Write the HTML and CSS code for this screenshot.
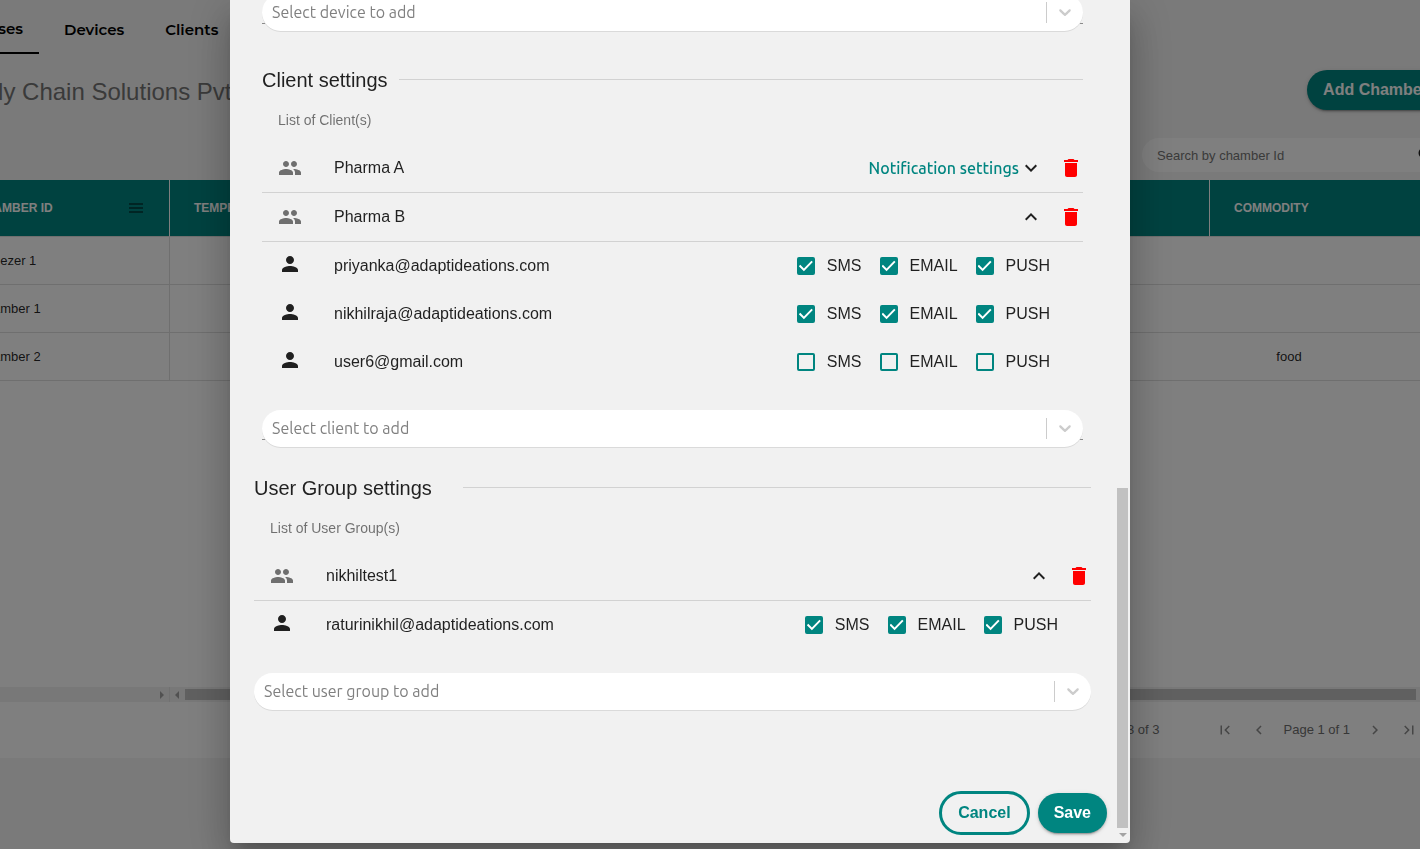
FILE: index.html
```html
<!DOCTYPE html>
<html lang="en">
<head>
<meta charset="utf-8">
<title>Chambers</title>
<link rel="stylesheet" href="styles.css">
</head>
<body>
<svg class="sprite" aria-hidden="true">
  <symbol id="people" viewBox="0 0 24 24"><path d="M16 11c1.66 0 2.99-1.34 2.99-3S17.66 5 16 5s-3 1.34-3 3 1.34 3 3 3zm-8 0c1.66 0 2.99-1.34 2.99-3S9.66 5 8 5 5 6.34 5 8s1.34 3 3 3zm0 2c-2.33 0-7 1.17-7 3.5V19h14v-2.500c0-2.330-4.670-3.500-7-3.500zm8 0c-.29 0-.62.02-.97.05 1.160.84 1.970 1.970 1.970 3.450V19h6v-2.500c0-2.330-4.670-3.500-7-3.500z"/></symbol>
  <symbol id="person" viewBox="0 0 24 24"><path d="M12 12c2.210 0 4-1.790 4-4s-1.790-4-4-4-4 1.790-4 4 1.790 4 4 4zm0 2c-2.670 0-8 1.340-8 4v2h16v-2c0-2.660-5.330-4-8-4z"/></symbol>
  <symbol id="trash" viewBox="0 0 24 24"><path d="M6 19c0 1.100.9 2 2 2h8c1.100 0 2-.9 2-2V7H6v12zM19 4h-3.500l-1-1h-5l-1 1H5v2h14V4z"/></symbol>
  <symbol id="down" viewBox="0 0 24 24"><path d="M7.410 8.590 12 13.170l4.590-4.580L18 10l-6 6-6-6z"/></symbol>
  <symbol id="up" viewBox="0 0 24 24"><path d="M7.410 15.410 12 10.830l4.590 4.580L18 14l-6-6-6 6z"/></symbol>
  <symbol id="left" viewBox="0 0 24 24"><path d="M15.410 7.410 14 6l-6 6 6 6 1.410-1.410L10.830 12z"/></symbol>
  <symbol id="right" viewBox="0 0 24 24"><path d="M10 6 8.590 7.410 13.170 12l-4.580 4.590L10 18l6-6z"/></symbol>
  <symbol id="first" viewBox="0 0 24 24"><path d="M18.410 16.590 13.820 12l4.590-4.590L17 6l-6 6 6 6zM6 6h2v12H6z"/></symbol>
  <symbol id="last" viewBox="0 0 24 24"><path d="M5.590 7.410 10.180 12l-4.590 4.590L7 18l6-6-6-6zM16 6h2v12h-2z"/></symbol>
  <symbol id="search" viewBox="0 0 24 24"><path d="M15.500 14h-.79l-.28-.27A6.470 6.470 0 0 0 16 9.500 6.500 6.500 0 1 0 9.500 16c1.610 0 3.090-.59 4.230-1.570l.27.28v.79l5 4.990L20.490 19l-4.990-5zm-6 0a4.500 4.500 0 1 1 0-9 4.500 4.500 0 0 1 0 9z"/></symbol>
  <symbol id="select-arrow" viewBox="0 0 20 20"><path d="M4.516 7.548c.436-.446 1.043-.481 1.576 0L10 11.295l3.908-3.747c.533-.481 1.141-.446 1.574 0 .436.445.408 1.197 0 1.615-.406.418-4.695 4.502-4.695 4.502a1.095 1.095 0 0 1-1.576 0S4.924 9.581 4.516 9.163s-.436-1.170 0-1.615z"/></symbol>
</svg>

<div class="app">
  <nav class="nav">
    <a class="nav-link first active" href="#">Warehouses</a>
    <a class="nav-link" href="#">Devices</a>
    <a class="nav-link" href="#">Clients</a>
  </nav>
  <header class="titlebar">
    <h1>Supply Chain Solutions Pvt</h1>
    <button class="btn btn-solid" type="button">Add Chamber</button>
  </header>
  <div class="toolbar">
    <div class="search">
      <input type="text" placeholder="Search by chamber Id" aria-label="Search by chamber Id">
      <svg class="search-icon"><use href="#search"/></svg>
    </div>
  </div>
  <main class="grid">
    <div class="grid-body">
      <table>
        <colgroup><col class="col-id"><col><col class="col-commodity"><col class="col-rest"></colgroup>
        <thead>
          <tr>
            <th><div class="head-cell"><span>CHAMBER ID</span><span class="menu-icon"></span></div></th>
            <th>TEMPERATURE</th>
            <th>COMMODITY</th>
            <th></th>
          </tr>
        </thead>
        <tbody>
          <tr><td>Freezer 1</td><td></td><td></td><td></td></tr>
          <tr><td>Chamber 1</td><td></td><td></td><td></td></tr>
          <tr><td>Chamber 2</td><td></td><td>food</td><td></td></tr>
        </tbody>
      </table>
    </div>
    <div class="hscroll">
      <div class="hscroll-pinned"><span class="tri tri-right"></span></div>
      <div class="hscroll-main"><span class="tri tri-left"></span><span class="hthumb"></span></div>
    </div>
    <footer class="pager">
      <span class="pager-count">1 to 3 of 3</span>
      <div class="pager-nav">
        <button type="button" aria-label="First page"><svg><use href="#first"/></svg></button>
        <button type="button" aria-label="Previous page"><svg><use href="#left"/></svg></button>
      </div>
      <span class="pager-page">Page 1 of 1</span>
      <div class="pager-nav">
        <button type="button" aria-label="Next page"><svg><use href="#right"/></svg></button>
        <button type="button" aria-label="Last page"><svg><use href="#last"/></svg></button>
      </div>
    </footer>
  </main>
</div>

<div class="backdrop">
  <div class="modal" role="dialog" aria-modal="true" aria-label="Chamber settings">
    <form class="content">
      <section class="inset">
        <div class="picker picker-line picker-top">
          <select aria-label="Select device to add"><option>Select device to add</option></select>
          <svg><use href="#select-arrow"/></svg>
        </div>
        <div class="heading heading-client"><h2>Client settings</h2><hr></div>
        <h3>List of Client(s)</h3>
        <div class="row">
          <svg class="lead-icon"><use href="#people"/></svg>
          <span class="name">Pharma A</span>
          <button class="toggle" type="button">Notification settings<svg><use href="#down"/></svg></button>
          <button class="delete" type="button" aria-label="Delete Pharma A"><svg><use href="#trash"/></svg></button>
        </div>
        <div class="row">
          <svg class="lead-icon"><use href="#people"/></svg>
          <span class="name">Pharma B</span>
          <button class="toggle" type="button" aria-label="Collapse Pharma B"><svg><use href="#up"/></svg></button>
          <button class="delete" type="button" aria-label="Delete Pharma B"><svg><use href="#trash"/></svg></button>
        </div>
        <div class="user">
          <svg class="lead-icon"><use href="#person"/></svg>
          <span class="name">priyanka@adaptideations.com</span>
          <label><input type="checkbox" checked>SMS</label>
          <label><input type="checkbox" checked>EMAIL</label>
          <label><input type="checkbox" checked>PUSH</label>
        </div>
        <div class="user">
          <svg class="lead-icon"><use href="#person"/></svg>
          <span class="name">nikhilraja@adaptideations.com</span>
          <label><input type="checkbox" checked>SMS</label>
          <label><input type="checkbox" checked>EMAIL</label>
          <label><input type="checkbox" checked>PUSH</label>
        </div>
        <div class="user">
          <svg class="lead-icon"><use href="#person"/></svg>
          <span class="name">user6@gmail.com</span>
          <label><input type="checkbox">SMS</label>
          <label><input type="checkbox">EMAIL</label>
          <label><input type="checkbox">PUSH</label>
        </div>
        <div class="picker picker-line">
          <select aria-label="Select client to add"><option>Select client to add</option></select>
          <svg><use href="#select-arrow"/></svg>
        </div>
      </section>
      <section>
        <div class="heading heading-group"><h2>User Group settings</h2><hr></div>
        <h3>List of User Group(s)</h3>
        <div class="row">
          <svg class="lead-icon"><use href="#people"/></svg>
          <span class="name">nikhiltest1</span>
          <button class="toggle" type="button" aria-label="Collapse nikhiltest1"><svg><use href="#up"/></svg></button>
          <button class="delete" type="button" aria-label="Delete nikhiltest1"><svg><use href="#trash"/></svg></button>
        </div>
        <div class="user">
          <svg class="lead-icon"><use href="#person"/></svg>
          <span class="name">raturinikhil@adaptideations.com</span>
          <label><input type="checkbox" checked>SMS</label>
          <label><input type="checkbox" checked>EMAIL</label>
          <label><input type="checkbox" checked>PUSH</label>
        </div>
        <div class="picker">
          <select aria-label="Select user group to add"><option>Select user group to add</option></select>
          <svg><use href="#select-arrow"/></svg>
        </div>
      </section>
      <div class="actions">
        <button class="btn btn-outline" type="button">Cancel</button>
        <button class="btn btn-solid" type="submit">Save</button>
      </div>
    </form>
    <div class="vscroll"><span class="vthumb"></span><span class="tri tri-down"></span></div>
  </div>
</div>
</body>
</html>
```
FILE: styles.css
```css
:root {
  --teal: #008580;
  --text: rgba(0, 0, 0, 0.87);
  --muted: rgba(0, 0, 0, 0.54);
}

* { box-sizing: border-box; }

body {
  margin: 0;
  overflow: hidden;
  background: #f4f4f4;
  color: var(--text);
  font: 16px/24px "Liberation Sans", Arial, sans-serif;
}

h1, h2, h3 { margin: 0; font-weight: 400; }
button { font: inherit; border: 0; background: none; padding: 0; cursor: pointer; }
svg { width: 24px; height: 24px; fill: currentColor; flex: none; display: block; }
.sprite { display: none; }

/* Page, scrolled sideways behind the dialog */
.app { margin: 0 -60px 0 -152px; }

.nav { display: flex; gap: 9px; height: 54px; }
.nav-link {
  display: flex;
  align-items: center;
  padding: 6px 16px 0;
  color: #000;
  font: 600 15px/24px Montserrat, Inter, sans-serif;
  text-decoration: none;
}
.nav-link.first { width: 191px; justify-content: flex-end; }
.nav-link.active { border-bottom: 2px solid #000; }

.titlebar {
  display: flex;
  align-items: center;
  justify-content: space-between;
  height: 72px;
  padding: 0 36px 0 94px;
}
.titlebar h1 { padding-top: 4px; color: #757575; font-size: 24px; line-height: 32px; }

.btn {
  border-radius: 22px;
  padding: 0 16px;
  height: 40px;
  font-size: 16px;
  font-weight: 700;
}
.btn-solid {
  background: var(--teal);
  color: #fff;
  box-shadow: 0 3px 1px -2px rgba(0, 0, 0, 0.2), 0 2px 2px rgba(0, 0, 0, 0.14), 0 1px 5px rgba(0, 0, 0, 0.12);
}
.btn-outline { height: 44px; border: 3px solid var(--teal); color: var(--teal); }

.toolbar { display: flex; justify-content: flex-end; padding: 12px 42px 8px 0; }
.search {
  display: flex;
  align-items: center;
  width: 296px;
  height: 34px;
  padding: 0 2px 0 15px;
  border-radius: 17px;
  background: #fff;
}
.search input {
  flex: 1;
  min-width: 0;
  border: 0;
  padding: 2px 0 0;
  background: none;
  color: #757575;
  font: 13px/16px "Liberation Sans", Arial, sans-serif;
}
.search-icon { width: 20px; height: 20px; }

.grid { background: #fff; }
.grid-body { min-height: 507px; }
table { width: 100%; table-layout: fixed; border-collapse: separate; border-spacing: 0; }
.col-id { width: 322px; }
.col-commodity { width: 158px; }
.col-rest { width: 112px; }
th {
  height: 57px;
  padding: 0 24px;
  background: var(--teal);
  border-bottom: 1px solid #dedede;
  color: #fff;
  font-size: 12px;
  line-height: 16px;
  text-align: left;
}
th:nth-child(-n+2) { border-right: 1px solid #fff; }
.head-cell { display: flex; align-items: center; justify-content: space-between; padding-left: 104px; }
.menu-icon {
  width: 14px;
  height: 10px;
  margin-right: 2px;
  background: repeating-linear-gradient(#004b48 0 2px, transparent 2px 4px);
}
td {
  height: 48px;
  padding: 0;
  border-bottom: 1px solid #dedede;
  font-size: 13px;
  line-height: 16px;
  text-align: center;
}
td:first-child { border-right: 1px solid #dedede; }

.hscroll { display: flex; height: 15px; background: #f1f1f1; }
.hscroll-pinned { display: flex; align-items: center; justify-content: flex-end; width: 322px; padding-right: 5px; border-right: 1px solid #e2e2e2; }
.hscroll-main { display: flex; flex: 1; align-items: center; gap: 6px; padding: 0 64px 0 5px; }
.hthumb { flex: 1; height: 11px; background: #c1c1c1; }
.tri { width: 0; height: 0; border: 4px solid transparent; }
.tri-right { border-left-color: #a3a3a3; border-right-width: 0; }
.tri-left { border-right-color: #a3a3a3; border-left-width: 0; }
.tri-down { border-top-color: #a3a3a3; border-bottom-width: 0; }

.pager {
  display: flex;
  align-items: center;
  justify-content: flex-end;
  height: 56px;
  padding-right: 59px;
  color: #6f6f6f;
  font-size: 13px;
}
.pager-count { margin-right: 53px; }
.pager-page { margin: 0 13px; }
.pager-nav { display: flex; gap: 10px; }
.pager-nav button { color: #8c8c8c; padding: 3px; }
.pager-nav svg { width: 18px; height: 18px; }

/* Dialog */
.backdrop {
  position: fixed;
  inset: 0;
  display: flex;
  justify-content: center;
  padding: 0 84px 6px 24px;
  background: rgba(0, 0, 0, 0.5);
}
.modal {
  display: flex;
  width: 100%;
  max-width: 900px;
  overflow: hidden;
  border-radius: 0 0 4px 4px;
  background: #f1f1f1;
  box-shadow: 0 11px 15px -7px rgba(0, 0, 0, 0.2), 0 24px 38px 3px rgba(0, 0, 0, 0.14), 0 9px 46px 8px rgba(0, 0, 0, 0.12);
}
.content { display: flex; flex: 1; flex-direction: column; min-width: 0; padding: 0 24px 8px; }
.inset { padding: 0 8px; }

.picker { position: relative; margin: 24px 0; height: 38px; isolation: isolate; }
.picker-top { margin: -6px 0 32px; }
.picker-line::before {
  content: "";
  position: absolute;
  z-index: -1;
  inset: 0 0 8px;
  border-bottom: 1px solid #8a8a8a;
}
.picker select {
  width: 100%;
  height: 37px;
  padding: 0 40px 2px 10px;
  appearance: none;
  border: 0;
  border-radius: 19px;
  background: #fff;
  box-shadow: 0 1px 0 #dadada;
  color: #808080;
  font: 400 16px/24px Ubuntu, "Noto Sans", sans-serif;
}
.picker::after {
  content: "";
  position: absolute;
  top: 8px;
  right: 36px;
  width: 1px;
  height: 21px;
  background: #ccc;
}
.picker svg {
  position: absolute;
  top: 8px;
  right: 8px;
  width: 20px;
  height: 20px;
  color: #ccc;
  pointer-events: none;
}

.heading { display: grid; align-items: center; }
.heading-client { grid-template-columns: 1fr 5fr; }
.heading-group { grid-template-columns: 1fr 3fr; }
.heading h2 { font-size: 20px; line-height: 32px; white-space: nowrap; }
.heading hr { width: 100%; height: 1px; margin: 0 0 2px; border: 0; background: #d2d2d2; }

h3 { padding: 0 16px; color: var(--muted); font-size: 14px; line-height: 48px; }

.row, .user { display: flex; align-items: center; min-height: 48px; padding-left: 16px; }
.row { min-height: 49px; border-bottom: 1px solid #d2d2d2; }
.lead-icon { margin-right: 32px; }
.row .lead-icon { color: var(--muted); }
.user .lead-icon { height: 28px; padding-bottom: 4px; }
.name { flex: 1; min-width: 0; }
.toggle { display: flex; align-items: center; color: var(--teal); font: 500 16px/24px Ubuntu, "Noto Sans", sans-serif; }
.toggle svg { color: var(--text); }
.delete { margin-left: 16px; color: #f00; }

.user { padding-right: 33px; }
.user label { display: flex; align-items: center; gap: 12px; margin-left: 18px; }
.user input {
  width: 18px;
  height: 18px;
  margin: 0;
  appearance: none;
  border: 2px solid var(--teal);
  border-radius: 2px;
}
.user input:checked { display: grid; background: var(--teal); }
.user input:checked::before {
  content: "";
  background: #fff;
  clip-path: polygon(0 51%, 10% 41%, 36% 67%, 90% 12%, 100% 22%, 36% 87%);
}

.actions { display: flex; align-items: center; justify-content: flex-end; gap: 8px; margin: auto -16px 0 0; }

.vscroll {
  display: flex;
  flex-direction: column;
  align-items: center;
  justify-content: flex-end;
  width: 15px;
  padding-bottom: 6px;
}
.vthumb { width: 11px; height: calc(40% + 5px); margin-bottom: 5px; background: #c1c1c1; }
```
